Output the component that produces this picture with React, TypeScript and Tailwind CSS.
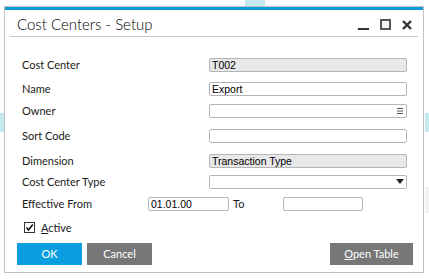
const label = "text-[11px] leading-[14px] text-[#1a1a1a]";
const field =
  "h-[14px] rounded-[2px] border border-[#b4b4b4] px-[2px] font-['Liberation_Sans',sans-serif] text-[10.5px] leading-[12px] text-black";

function FormRow({
  name,
  className,
  children,
}: {
  name: string;
  className: string;
  children: React.ReactNode;
}) {
  return (
    <div className={`flex h-[14px] items-center ${className}`}>
      <div className={`w-[187px] shrink-0 ${label}`}>{name}</div>
      {children}
    </div>
  );
}

export default function App() {
  return (
    <div
      className="relative h-[279px] w-[429px] overflow-hidden bg-white pl-[4px] pt-[6px]"
      style={{ fontFamily: "Lato, 'Liberation Sans', sans-serif" }}
    >
      {/* desktop behind the window */}
      <div className="absolute left-[245px] top-0 h-[6px] w-[20px] bg-[#c4e9ee]" />
      <div className="absolute left-0 top-[113px] h-[19px] w-[4px] bg-[#c4e9ee]" />
      <div className="absolute left-[425px] top-[113px] h-[19px] w-[4px] bg-[#c4e9ee]" />
      <div className="absolute left-[425px] top-[187px] h-[26px] w-[4px] bg-[#f2f2f2]" />

      <div className="relative flex h-[267px] w-[420px] flex-col border-x border-b border-t border-[#c2c2c2] bg-white">
        <div className="h-[3px] bg-[#0d9ddb]" />

        {/* title bar */}
        <div className="flex h-[26px] items-center pl-[12px] pr-[11px]">
          <div className="flex-1 pt-[2px] text-[15px] font-light leading-[20px] text-black">
            Cost Centers - Setup
          </div>
          <div className="flex items-center gap-[11px] pt-[3px]">
            <div className="mt-[8px] h-[2px] w-[11px] bg-[#333]" />
            <div className="h-[11px] w-[11px] border-2 border-[#555] bg-[#f4f4f4]" />
            <svg width="10" height="10" viewBox="0 0 10 10">
              <path d="M1 1 L9 9 M9 1 L1 9" stroke="#333" strokeWidth="2.4" />
            </svg>
          </div>
        </div>
        <div className="mx-[5px] h-px bg-[#c8c8c8]" />

        {/* form */}
        <div className="flex flex-col pl-[17px]">
          <FormRow name="Cost Center" className="mt-[21px]">
            <div className={`w-[198px] bg-[#e8e8e8] ${field}`}>T002</div>
          </FormRow>
          <FormRow name="Name" className="mt-[10px]">
            <div className={`w-[198px] bg-white ${field}`}>Export</div>
          </FormRow>
          <FormRow name="Owner" className="mt-[8px]">
            <div className={`relative w-[198px] bg-white ${field}`}>
              <svg
                className="absolute right-[3px] top-[3px]"
                width="6"
                height="6"
                viewBox="0 0 6 6"
              >
                <path d="M0 0.5 H6 M0 3 H6 M0 5.5 H6" stroke="#555" strokeWidth="1" />
              </svg>
            </div>
          </FormRow>
          <FormRow name="Sort Code" className="mt-[11px]">
            <div className={`w-[198px] bg-white ${field}`} />
          </FormRow>
          <FormRow name="Dimension" className="mt-[11px]">
            <div className={`w-[198px] bg-[#e8e8e8] ${field}`}>Transaction Type</div>
          </FormRow>
          <FormRow name="Cost Center Type" className="mt-[7px]">
            <div className={`relative w-[198px] bg-white ${field}`}>
              <svg
                className="absolute right-[2px] top-[3px]"
                width="8"
                height="5"
                viewBox="0 0 8 5"
              >
                <path d="M0 0 H8 L4 5 Z" fill="#222" />
              </svg>
            </div>
          </FormRow>
          <div className="mt-[8px] flex h-[14px] items-center">
            <div className={`w-[126px] shrink-0 ${label}`}>Effective From</div>
            <div className={`w-[81px] bg-white ${field}`}>01.01.00</div>
            <div className={`ml-[4px] w-[50px] ${label}`}>To</div>
            <div className={`w-[80px] bg-white ${field}`} />
          </div>
          <div className="ml-[2px] mt-[11px] flex h-[11px] items-center gap-[6px]">
            <div className="flex h-[11px] w-[11px] items-center justify-center border border-[#333] bg-white">
              <svg width="9" height="9" viewBox="0 0 9 9">
                <path d="M1.5 4.5 L3.5 7 L7.8 1.5" fill="none" stroke="#111" strokeWidth="1.6" />
              </svg>
            </div>
            <div className={label}>
              <span className="underline">A</span>ctive
            </div>
          </div>
        </div>

        {/* buttons */}
        <div className="mt-[10px] flex h-[22px] pl-[12px] pr-[10px]">
          <button className="h-[22px] w-[65px] bg-[#0a9de0] text-[11px] text-white">OK</button>
          <button className="ml-[5px] h-[22px] w-[65px] bg-[#777777] text-[11px] text-white">
            Cancel
          </button>
          <div className="flex-1" />
          <button className="h-[22px] w-[83px] bg-[#777777] text-[11px] text-white">
            <span className="underline">O</span>pen Table
          </button>
        </div>
      </div>
    </div>
  );
}
